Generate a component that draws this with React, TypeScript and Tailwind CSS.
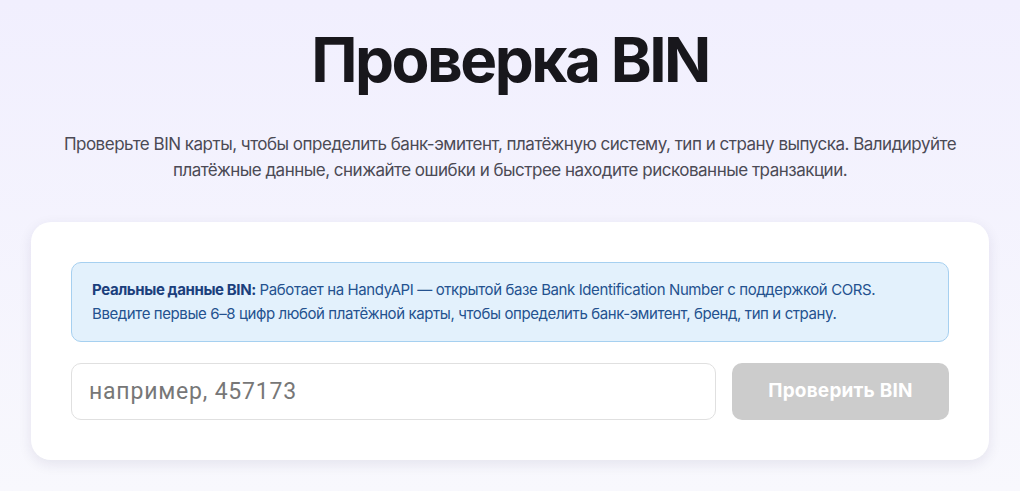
import React, { useState } from 'react';

const App: React.FC = () => {
  const [bin, setBin] = useState('');

  return (
    <div className="min-h-screen bg-gradient-to-b from-[#f1effe] to-[#f8f8fd] font-['Inter',sans-serif]">
      <div className="mx-auto w-[958px] pt-[22px]">
        <h1 className="text-center text-[62px] font-bold leading-[76px] tracking-[-2.5px] text-[#18171c]">
          Проверка BIN
        </h1>
        <p className="mx-auto mt-[33px] w-[930px] text-center text-[17px] leading-[26px] tracking-[-0.5px] text-[#4b4a55]">
          Проверьте BIN карты, чтобы определить банк-эмитент, платёжную систему, тип и страну выпуска. Валидируйте
          платёжные данные, снижайте ошибки и быстрее находите рискованные транзакции.
        </p>

        <div className="mt-[39px] rounded-[20px] bg-white p-10 shadow-[0_4px_14px_rgba(30,20,80,0.09)]">
          <div className="rounded-[10px] border border-[#a6d0f0] bg-[#e3f1fc] px-5 py-[15px] text-[15px] leading-[24px] tracking-[-0.4px] text-[#24528f]">
            <span className="font-bold text-[#1b3f7c]">Реальные данные BIN:</span> Работает на HandyAPI — открытой базе
            Bank Identification Number с поддержкой CORS.
            <br />
            Введите первые 6–8 цифр любой платёжной карты, чтобы определить банк-эмитент, бренд, тип и страну.
          </div>

          <div className="mt-[21px] flex gap-4">
            <input
              value={bin}
              onChange={e => setBin(e.target.value)}
              placeholder="например, 457173"
              className="h-[57px] flex-1 rounded-[10px] border border-[#e0e0e0] pl-[17px] pr-5 font-['Roboto',sans-serif] text-[23px] tracking-[0.8px] text-[#333] placeholder:text-[#777] outline-none"
            />
            <button
              disabled={bin.length < 6}
              className="h-[57px] w-[217px] rounded-[10px] bg-[#cccccc] text-[19px] font-bold tracking-[0.2px] text-white"
            >
              Проверить BIN
            </button>
          </div>
        </div>
      </div>
    </div>
  );
};

export default App;
